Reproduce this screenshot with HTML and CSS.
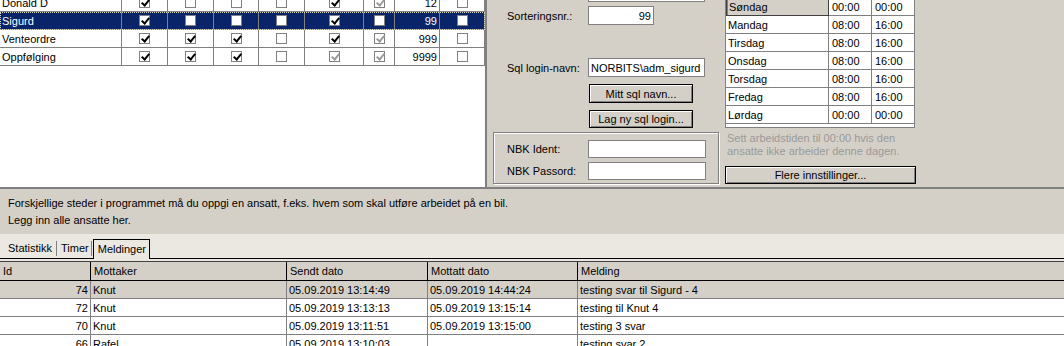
FILE: index.html
```html
<!DOCTYPE html>
<html>
<head>
<meta charset="utf-8">
<link rel="stylesheet" href="styles.css">
</head>
<body>
<div class="app">
  <div class="top">
    <div class="emp-grid">
      <div class="erow">
        <div class="cell name">Donald D</div>
        <div class="cell"><span class="cb on"></span></div>
        <div class="cell"><span class="cb"></span></div>
        <div class="cell"><span class="cb"></span></div>
        <div class="cell"><span class="cb"></span></div>
        <div class="cell"><span class="cb on"></span></div>
        <div class="cell"><span class="cb on dim"></span></div>
        <div class="cell num">12</div>
        <div class="cell"><span class="cb"></span></div>
      </div>
      <div class="erow sel">
        <div class="cell name">Sigurd</div>
        <div class="cell"><span class="cb on"></span></div>
        <div class="cell"><span class="cb"></span></div>
        <div class="cell"><span class="cb"></span></div>
        <div class="cell"><span class="cb"></span></div>
        <div class="cell"><span class="cb on"></span></div>
        <div class="cell"><span class="cb"></span></div>
        <div class="cell num">99</div>
        <div class="cell"><span class="cb"></span></div>
      </div>
      <div class="erow">
        <div class="cell name">Venteordre</div>
        <div class="cell"><span class="cb on"></span></div>
        <div class="cell"><span class="cb on"></span></div>
        <div class="cell"><span class="cb on"></span></div>
        <div class="cell"><span class="cb"></span></div>
        <div class="cell"><span class="cb on"></span></div>
        <div class="cell"><span class="cb on dim"></span></div>
        <div class="cell num">999</div>
        <div class="cell"><span class="cb"></span></div>
      </div>
      <div class="erow">
        <div class="cell name">Oppfølging</div>
        <div class="cell"><span class="cb on"></span></div>
        <div class="cell"><span class="cb on"></span></div>
        <div class="cell"><span class="cb on"></span></div>
        <div class="cell"><span class="cb"></span></div>
        <div class="cell"><span class="cb on dim"></span></div>
        <div class="cell"><span class="cb on dim"></span></div>
        <div class="cell num">9999</div>
        <div class="cell"><span class="cb"></span></div>
      </div>
    </div>

    <div class="mid">
      <div class="frow first"><span class="lbl"></span><span class="inp w116"></span></div>
      <div class="frow sort"><span class="lbl">Sorteringsnr.:</span><span class="inp w65 ralign">99</span></div>
      <div class="frow sql"><span class="lbl">Sql login-navn:</span><span class="inp w116">NORBITS\adm_sigurd</span></div>
      <div class="btn b1">Mitt sql navn...</div>
      <div class="btn b2">Lag ny sql login...</div>
      <div class="group">
        <div class="frow g1"><span class="lbl">NBK Ident:</span><span class="inp w117 h18"></span></div>
        <div class="frow g2"><span class="lbl">NBK Passord:</span><span class="inp w117 h18"></span></div>
      </div>
    </div>

    <div class="side">
      <div class="sched">
        <div class="srow"><div class="sc day cur">Søndag</div><div class="sc">00:00</div><div class="sc">00:00</div></div>
        <div class="srow"><div class="sc day">Mandag</div><div class="sc">08:00</div><div class="sc">16:00</div></div>
        <div class="srow"><div class="sc day">Tirsdag</div><div class="sc">08:00</div><div class="sc">16:00</div></div>
        <div class="srow"><div class="sc day">Onsdag</div><div class="sc">08:00</div><div class="sc">16:00</div></div>
        <div class="srow"><div class="sc day">Torsdag</div><div class="sc">08:00</div><div class="sc">16:00</div></div>
        <div class="srow"><div class="sc day">Fredag</div><div class="sc">08:00</div><div class="sc">16:00</div></div>
        <div class="srow"><div class="sc day">Lørdag</div><div class="sc">00:00</div><div class="sc">00:00</div></div>
      </div>
      <div class="note">Sett arbeidstiden til 00:00 hvis den<br>ansatte ikke arbeider denne dagen.</div>
      <div class="btn b3">Flere innstillinger...</div>
    </div>
  </div>

  <div class="split"></div>

  <div class="status">
    <div>Forskjellige steder i programmet må du oppgi en ansatt, f.eks. hvem som skal utføre arbeidet på en bil.</div>
    <div>Legg inn alle ansatte her.</div>
  </div>

  <div class="tabs">
    <div class="tab t1">Statistikk</div>
    <div class="tsep"></div>
    <div class="tab t2">Timer</div>
    <div class="tsep"></div>
    <div class="tab active">Meldinger</div>
  </div>
  <div class="tabgap"></div>

  <div class="msg-grid">
    <div class="mrow head">
      <div class="mc">Id</div><div class="mc">Mottaker</div><div class="mc">Sendt dato</div><div class="mc">Mottatt dato</div><div class="mc">Melding</div>
    </div>
    <div class="mrow cur">
      <div class="mc id">74</div><div class="mc">Knut</div><div class="mc">05.09.2019 13:14:49</div><div class="mc">05.09.2019 14:44:24</div><div class="mc">testing svar til Sigurd - 4</div>
    </div>
    <div class="mrow">
      <div class="mc id">72</div><div class="mc">Knut</div><div class="mc">05.09.2019 13:13:13</div><div class="mc">05.09.2019 13:15:14</div><div class="mc">testing til Knut 4</div>
    </div>
    <div class="mrow">
      <div class="mc id">70</div><div class="mc">Knut</div><div class="mc">05.09.2019 13:11:51</div><div class="mc">05.09.2019 13:15:00</div><div class="mc">testing 3 svar</div>
    </div>
    <div class="mrow">
      <div class="mc id">66</div><div class="mc">Rafel</div><div class="mc">05.09.2019 13:10:03</div><div class="mc"></div><div class="mc">testing svar 2</div>
    </div>
  </div>
</div>
</body>
</html>
```
FILE: styles.css
```css
* { box-sizing: border-box; }
html, body { margin: 0; padding: 0; }
body {
  width: 1064px;
  height: 346px;
  overflow: hidden;
  background: #d4d0c8;
  font-family: "Liberation Sans", Arial, sans-serif;
  font-size: 11px;
  color: #000;
}
.app { width: 1064px; height: 346px; overflow: hidden; }

/* top area */
.top { display: flex; height: 187px; overflow: hidden; }

.emp-grid {
  width: 487px;
  flex: none;
  background: #fff;
  border-right: 2px solid #808080;
  overflow: hidden;
}
.erow {
  display: grid;
  grid-template-columns: 122px 46px 46px 45px 46px 59px 31px 45px 45px;
  height: 18px;
}
.erow:first-child { margin-top: -6px; }
.cell {
  border-right: 1px solid #808080;
  border-bottom: 1px solid #808080;
  display: flex;
  align-items: center;
  justify-content: center;
  white-space: nowrap;
  overflow: hidden;
}
.cell.name { justify-content: flex-start; padding-left: 2px; }
.cell.num { justify-content: flex-end; padding-right: 2px; }
.erow.sel { background: #0a246a; color: #fff; outline: 1px dotted #d8d8c0; outline-offset: -1px; }

.cb {
  position: relative;
  width: 11px;
  height: 11px;
  background: #fff;
  border: 1px solid #808080;
  display: block;
}
.cb.on::after {
  content: "";
  position: absolute;
  left: 3px;
  top: 0px;
  width: 3px;
  height: 6px;
  border: solid #000;
  border-width: 0 2px 2px 0;
  transform: rotate(40deg);
}
.cb.dim::after { border-color: #9a9a9a; }

/* middle form */
.mid { width: 233px; flex: none; display: flex; flex-direction: column; }
.frow { display: flex; align-items: center; padding-left: 20px; }
.lbl { width: 81px; flex: none; white-space: nowrap; }
.inp {
  display: flex;
  flex: none;
  align-items: center;
  height: 19px;
  background: #fff;
  border: 1px solid #808080;
  padding: 0 2px;
  white-space: nowrap;
  font-size: 11px;
}
.inp.ralign { justify-content: flex-end; }
.inp.h18 { height: 18px; }
.w116 { width: 117px; }
.w117 { width: 118px; }
.w65 { width: 66px; }
.frow.first { margin-top: -17px; }
.frow.sort { margin-top: 4px; }
.frow.sql { margin-top: 33px; }

.btn {
  height: 19px;
  display: flex;
  align-items: center;
  justify-content: center;
  background: #d4d0c8;
  border: 1px solid #000;
  box-shadow: inset 1px 1px #fff, inset -1px -1px #808080;
  white-space: nowrap;
}
.btn.b1 { margin: 7px 0 0 102px; width: 104px; }
.btn.b2 { margin: 7px 0 0 102px; width: 104px; height: 18px; }

.group {
  margin: 4px 0 0 6px;
  width: 226px;
  height: 52px;
  border: 1px solid #808080;
  box-shadow: inset 1px 1px #fff, 1px 1px #fff;
  padding-top: 7px;
}
.group .frow { padding-left: 13px; }
.group .frow.g2 { margin-top: 4px; }

/* right */
.side { flex: 1; display: flex; flex-direction: column; padding-left: 5px; }
.sched {
  margin-top: -3px;
  width: 190px;
  background: #fff;
  border: 1px solid #808080;
  padding-bottom: 3px;
}
.srow { display: grid; grid-template-columns: 103px 43px 42px; height: 18px; }
.sc {
  border-right: 1px solid #808080;
  border-bottom: 1px solid #808080;
  display: flex;
  align-items: center;
  padding-left: 3px;
  white-space: nowrap;
}
.srow .sc:last-child { border-right: none; }
.sc.day { padding-left: 2px; }
.sc.cur {
  background: #d4d0c8;
  border: 1px solid #404040;
  box-shadow: inset 1px 1px #808080;
}
.note {
  margin: 4px 0 0 2px;
  line-height: 13px;
  color: #9a9a9a;
  white-space: nowrap;
}
.btn.b3 { margin-top: 8px; width: 191px; height: 18px; }

.split { height: 2px; background: #808080; }

.status {
  height: 45px;
  padding: 6px 0 0 8px;
  line-height: 17px;
  white-space: nowrap;
}

.tabs {
  height: 25px;
  background: #ebe8e2;
  border-bottom: 1px solid #000;
  display: flex;
  align-items: flex-end;
  padding-left: 4px;
}
.tab {
  height: 18px;
  display: flex;
  align-items: center;
  white-space: nowrap;
  margin-bottom: 1px;
}
.tab.t1 { padding: 0 4px; }
.tab.t2 { padding: 0 2px 0 4px; }
.tsep { width: 1px; height: 15px; background: #808080; margin: 0 0 2px; }
.tab.active {
  height: 20px;
  margin: 0 0 -1px 1px;
  width: 57px;
  padding: 0 0 1px 4px;
  border: 1px solid #000;
  border-bottom: none;
  background: #ebe8e2;
}
.tabgap { height: 2px; background: #ebe8e2; }

.msg-grid { border-top: 1px solid #404040; background: #fff; }
.mrow {
  display: grid;
  grid-template-columns: 91px 196px 141px 150px 1fr;
  height: 18px;
}
.mc {
  border-right: 1px solid #808080;
  border-bottom: 1px solid #808080;
  display: flex;
  align-items: center;
  padding-left: 2px;
  white-space: nowrap;
  overflow: hidden;
}
.mrow .mc:last-child { border-right: none; }
.mc.id { justify-content: flex-end; padding-right: 2px; }
.mrow.head { background: #d4d0c8; height: 19px; }
.mrow.head .mc { border-color: #000; padding-left: 3px; }
.mrow.cur { background: #d4d0c8; }
```
